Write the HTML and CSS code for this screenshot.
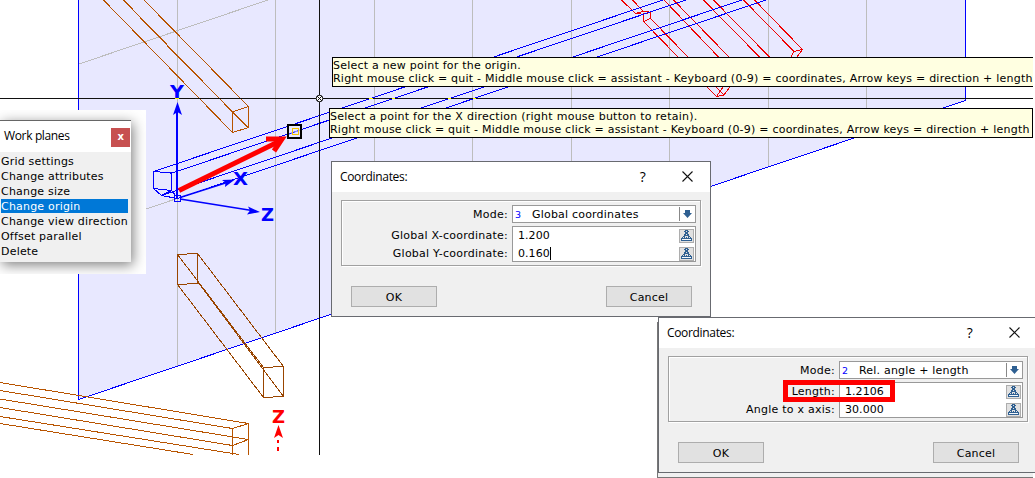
FILE: index.html
```html
<!DOCTYPE html>
<html lang="en">
<head>
<meta charset="utf-8">
<title>Work planes</title>
<link rel="stylesheet" href="styles.css">
</head>
<body>
<main class="desktop">
<svg class="drawing" width="1035" height="478" viewBox="0 0 1035 478">
  <defs>
    <clipPath id="view"><rect width="1033" height="455"/></clipPath>
    <symbol id="measure" viewBox="0 0 13 12">
      <path fill="#2f6092" shape-rendering="crispEdges" d="M5 0h3v1H5zM4 1h2v1H4zM7 1h2v1H7zM5 2h3v1H5zM5 3h3v1H5zM4 4h2v1H4zM7 4h2v1H7zM4 5h5v1H4zM3 6h2v1H3zM8 6h2v1H8zM2 7h1v1H2zM10 7h1v1H10zM4 7h1v1H4zM6 7h1v1H6zM8 7h1v1H8zM1 8h11v1H1zM1 9h1v1H1zM11 9h1v1H11zM1 10h11v1H1z"/>
      <path fill="#f4f7fa" shape-rendering="crispEdges" d="M2 9h9v1H2z"/>
    </symbol>
    <symbol id="down" viewBox="0 0 9 8"><path fill="#2f6092" d="M2 0h5v3h2L4.500 8 0 3h2z"/></symbol>
    <symbol id="cross" viewBox="0 0 11 11"><path d="M.5.5l10 10M10.500.5l-10 10" fill="none" stroke="#111" stroke-width="1.100"/></symbol>
  </defs>
  <g clip-path="url(#view)" fill="none" shape-rendering="crispEdges">
    <path fill="#e8e8ff" d="M78 0H966V100L78 399z"/>
    <path stroke="#bdbdbd" d="M177.500 0V366M275.500 0V333M374.500 0V300M472.500 0V267M571.500 0V233M669.500 0V200M768.500 0V167M866.500 0V134M79 64L268 0M140 211L177 198.500"/>
    <path stroke="#00f" d="M78.500 0V399.500L965.500 100.500V0"/>
    <g stroke="#b85400">
      <path d="M103.500 0L232.500 132.500M123.500 0L232.500 112M124 0L150 28L248 127.500M144 0L248.500 106.500M232.500 112L248.500 106.500V127.500L232.500 132.500z"/>
      <path d="M0 382.500L248.500 423.500M0 390.500L232.500 428.500M0 399L248.500 439.500M0 407.500L232.500 445.500M0 416.500L239 454.500M0 423.500L193 454.500M232.500 455V428.500L248.500 423.500V455M232.500 445.500L248.500 439.500"/>
    </g>
    <path stroke="#994500" d="M177.500 254.500L197.500 253.500V283.500L177.500 284.500zM263.500 367.500L283.500 366.500V396.500L263.500 397.500zM177.500 254.500L263.500 367.500M197.500 253.500L283.500 366.500M197.500 281.500L283.500 396.500M177.500 284.500L263.500 397.500"/>
    <path stroke="#f00000" d="M621.500 0L635.500 13.500L645 11L650.500 12.500V18.500L643.500 21.500V14L650.500 12.500M632.500 0L644 12M635.500 13.500H641M643.500 21.500L678 57M650.500 18.500L688 57M664 0L718.500 57M673.500 0L729 57M703.500 0L759.500 57M713.500 0L769.500 57M743.500 0L794 51.500L802.500 49.500L754.500 0M794 51.500L791 57M802.500 49.500L797 57M707 87L716.500 96.500L724 95L730 87M716 87L724 95M723 87L716.500 96.500"/>
    <path stroke="#00f" d="M153.500 171.500L663 0M170.500 173.500L686 0M161.500 195.500L742 0M177.500 198.500L766 0M153.500 171.500V188.500L161.500 195.500L177.500 198.500M153.500 171.500L171.500 173V190.500L153.500 188.500M161.500 195.500L171.500 190.500L177.500 198"/>
    <path stroke="#111" d="M0 98.500H1033M319.500 0V455"/>
    <path stroke="#ff0" d="M175 98.500H179M369 98.500h4M392 98.500h3M448 98.500h3M473 98.500h3"/>
  </g>
  <g fill="none" stroke="#00f" stroke-width="2">
    <path shape-rendering="crispEdges" d="M177 197V106"/>
    <path stroke-width="1.700" d="M180 197.500L230 181.500M180 199L255 211"/>
    <path stroke-width="1" shape-rendering="crispEdges" d="M174.500 195.500h6v6h-6z"/>
    <path stroke="none" fill="#00f" d="M177.500 102L182 115L177.500 112L173 115zM235 179.500L225 187L225.500 182.500L222 180zM260 212L247 214.500L250 210.500L248 206.500z"/>
  </g>
  <g class="axis">
    <text x="170" y="98" textLength="14" lengthAdjust="spacingAndGlyphs">Y</text>
    <text x="233" y="185" textLength="15" lengthAdjust="spacingAndGlyphs">X</text>
    <text x="261" y="220.500" textLength="13" lengthAdjust="spacingAndGlyphs">Z</text>
    <text class="red" x="272" y="423" textLength="13" lengthAdjust="spacingAndGlyphs">Z</text>
  </g>
  <path fill="red" d="M278.500 425L283 438L278.500 435L274 438zM277 440h2v3h-2zM277 447h2v4h-2z"/>
  <g fill="none" stroke="red" stroke-width="5">
    <path d="M179 190.500L281 140.500"/><path d="M266 139L282 139L274 151"/>
  </g>
  <rect x="288" y="125" width="13" height="13" fill="#e8e8ff" stroke="#000" stroke-width="2"/>
  <path d="M289 134L300 130" stroke="#00f" stroke-dasharray="3 1"/>
  <rect x="292.500" y="128.500" width="6" height="6" fill="none" stroke="#f5c400"/>
  <g fill="none" stroke="#111"><circle cx="319.500" cy="98.500" r="3.300" fill="#fff"/><path d="M317 96l5 5M322 96l-5 5"/></g>
</svg>

<section class="palette-backdrop">
  <div class="palette">
    <header class="palette-title"><span>Work planes</span><b class="palette-close">x</b></header>
    <ul class="menu">
      <li>Grid settings</li><li>Change attributes</li><li>Change size</li>
      <li class="selected">Change origin</li><li>Change view direction</li>
      <li>Offset parallel</li><li>Delete</li>
    </ul>
  </div>
</section>

<div class="tip tip-origin"><p>Select a new point for the origin.</p><p>Right mouse click = quit - Middle mouse click = assistant - Keyboard (0-9) = coordinates, Arrow keys = direction + length</p></div>
<div class="tip tip-direction"><p class="lead">Select a point for the X direction (right mouse button to retain).</p><p>Right mouse click = quit - Middle mouse click = assistant - Keyboard (0-9) = coordinates, Arrow keys = direction + length</p></div>

<section class="dialog dialog-global">
  <header class="titlebar"><span class="caption">Coordinates:</span><span class="help">?</span><svg class="close"><use href="#cross"/></svg></header>
  <div class="fields">
    <div class="labels"><span class="mode-label">Mode:</span><span>Global X-coordinate:</span><span>Global Y-coordinate:</span></div>
    <div class="controls">
      <div class="select"><i>3</i><span>Global coordinates</span><em><svg><use href="#down"/></svg></em></div>
      <div class="inputs">
        <div class="input"><span>1.200</span><button><svg><use href="#measure"/></svg></button></div>
        <div class="input"><span class="caret">0.160</span><button><svg><use href="#measure"/></svg></button></div>
      </div>
    </div>
  </div>
  <footer class="actions"><button class="btn">OK</button><button class="btn">Cancel</button></footer>
</section>

<div class="dialog-behind"></div>
<section class="dialog dialog-relative">
  <header class="titlebar"><span class="caption">Coordinates:</span><span class="help">?</span><svg class="close"><use href="#cross"/></svg></header>
  <div class="fields">
    <div class="labels"><span class="mode-label">Mode:</span><span>Length:</span><span>Angle to x axis:</span></div>
    <div class="controls">
      <div class="select"><i>2</i><span>Rel. angle + length</span><em><svg><use href="#down"/></svg></em></div>
      <div class="inputs">
        <div class="input"><span>1.2106</span><button><svg><use href="#measure"/></svg></button></div>
        <div class="input"><span>30.000</span><button><svg><use href="#measure"/></svg></button></div>
      </div>
    </div>
  </div>
  <footer class="actions"><button class="btn">OK</button><button class="btn">Cancel</button></footer>
</section>
<div class="highlight"></div>
</main>
</body>
</html>
```
FILE: styles.css
```css
* { box-sizing: border-box; }
body { margin: 0; background: #fff; color: #000; font: 11px/15px "DejaVu Sans", Verdana, sans-serif; letter-spacing: .2px; }
p, ul { margin: 0; padding: 0; }
button { font: inherit; color: inherit; letter-spacing: inherit; border-radius: 0; padding: 0; }
.desktop { position: relative; width: 1035px; height: 478px; overflow: hidden; }
.drawing { position: absolute; left: 0; top: 0; }
.axis { font: bold 18px "DejaVu Sans", sans-serif; fill: #00f; letter-spacing: 0; }
.axis .red { fill: red; }

.palette-backdrop { position: absolute; left: 0; top: 110px; width: 146px; height: 164px; padding-top: 10px; background: #fff; overflow: hidden; }
.palette { width: 131px; height: 142px; background: #f0f0f0; border-top: 1px solid #666; box-shadow: 2px 3px 12px rgba(0,0,0,.5); }
.palette-title { display: flex; justify-content: space-between; align-items: center; height: 31px; padding: 0 1px 2px 4px; background: #fff; font: 12px "Open Sans", sans-serif; letter-spacing: -.35px; }
.palette-close { width: 19px; height: 19px; margin-top: 3px; background: #c75050; color: #fff; font: bold 10px/18px "DejaVu Sans", sans-serif; text-align: center; }
.menu { list-style: none; padding: 2px 3px 0 1px; }
.menu li { height: 15px; line-height: 15px; white-space: nowrap; }
.menu .selected { height: 14px; margin-bottom: 1px; background: #0078d7; color: #fff; }

.tip { position: absolute; height: 30px; padding: 1px 0 0; border: 1px solid #000; background: #ffffe1; line-height: 13px; letter-spacing: .223px; white-space: nowrap; overflow: hidden; }
.tip-origin { left: 332px; top: 57px; width: 701px; border-right: 0; }
.tip-direction { left: 329px; top: 108px; width: 704px; }
.lead { letter-spacing: .26px; }

.dialog { position: absolute; width: 380px; height: 156px; border: 1px solid #686a70; background: #f0f0f0; }
.dialog-global { left: 331px; top: 161px; }
.dialog-relative { left: 658px; top: 317px; }
.dialog-behind { position: absolute; left: 657px; top: 322px; width: 376px; height: 156px; border: 1px solid #777; border-right: 0; background: #f0f0f0; }
.titlebar { display: flex; align-items: center; height: 30px; padding: 0 17.5px 2px 8px; background: #fff; font: 12px "Open Sans", sans-serif; letter-spacing: -.33px; }
.caption { flex: 1; }
.help { font-size: 14px; margin-right: 36px; }
.close { width: 11px; height: 11px; }
.fields { display: flex; gap: 4px; height: 66px; margin: 8px 9px 0; padding: 4px; border: 1px solid #a0a0a0; box-shadow: inset 1px 1px #fff, 1px 1px #fff; }
.labels { flex: 1; display: flex; flex-direction: column; padding-top: 1px; text-align: right; line-height: 18px; letter-spacing: .24px; }
.mode-label { margin-bottom: 3px; }
.controls { width: 184px; display: flex; flex-direction: column; gap: 3px; }
.select { display: flex; align-items: center; height: 18px; border: 1px solid #999; background: #fff; }
.select i { width: 19px; padding-left: 2px; color: #00f; font: 9.500px "DejaVu Sans", sans-serif; }
.select span { flex: 1; padding-top: 1px; }
.select em { display: grid; place-items: center; width: 16px; height: 14px; border-left: 1px solid #888; }
.select svg { width: 9px; height: 8px; }
.inputs { height: 36px; border: 1px solid #999; background: #fff; }
.input { display: flex; justify-content: space-between; align-items: center; height: 17px; padding: 0 1px 0 5px; letter-spacing: .05px; }
.input + .input { margin-top: 1px; }
.input span { line-height: 17px; }
.input button { display: grid; place-items: center; width: 15px; height: 14px; border: 1px solid #adadad; background: #e1e1e1; }
.input svg { width: 13px; height: 12px; }
.input .caret { border-right: 1px solid #000; line-height: 13px; }
.actions { display: flex; justify-content: space-between; padding: 20px 18px 0 19px; }
.btn { width: 86px; height: 21px; padding-top: 1px; border: 1px solid #adadad; background: #e1e1e1; }
.highlight { position: absolute; left: 783px; top: 380px; width: 112px; height: 22px; border: 5px solid red; }
```
